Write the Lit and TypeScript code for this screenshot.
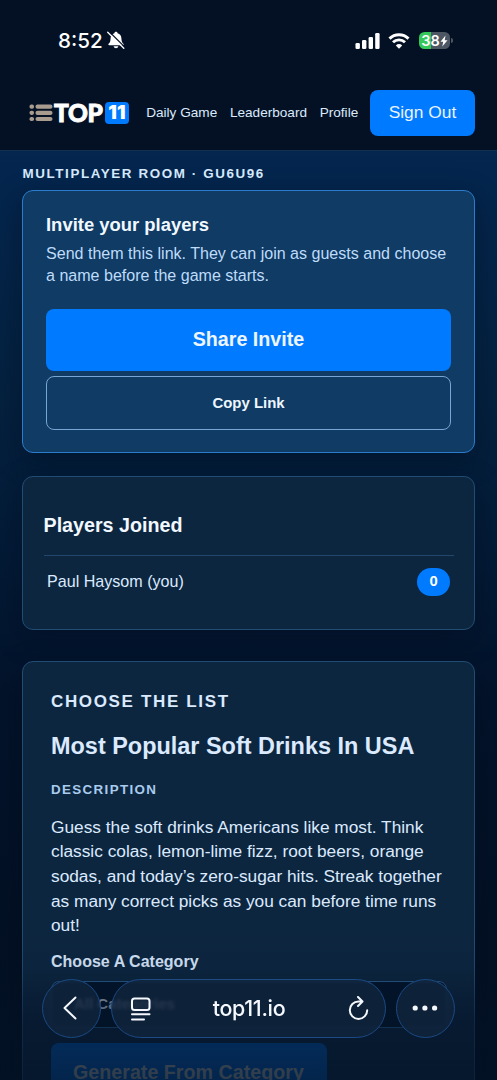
import { LitElement, html, css, svg } from "lit";
import { customElement, property } from "lit/decorators.js";

@customElement("status-bar")
class StatusBar extends LitElement {
  static styles = css`
    :host { display: flex; justify-content: space-between; align-items: center; height: 81px; padding: 0 44px 0 58px; box-sizing: border-box; color: #fff; font-family: Inter, sans-serif; }
    .left { display: flex; align-items: center; gap: 4px; }
    .time { font-size: 20.6px; font-weight: 500; line-height: 24px; }
    .right { display: flex; align-items: center; }
    .wifi { margin-left: 8px; }
    .battery { margin-left: 9px; display: flex; align-items: center; }
    .cell { width: 31px; height: 17px; border-radius: 5.5px; background: linear-gradient(90deg, #34c759 0 12.5px, #4d5764 12.5px); display: flex; align-items: center; justify-content: center; font-size: 14.5px; font-weight: 600; line-height: 17px; letter-spacing: 0; }
    .nub { width: 2px; height: 5px; margin-left: 1px; border-radius: 0 2px 2px 0; background: #4d5764; }
    svg { display: block; }
  `;
  render() {
    return html`
      <div class="left">
        <span class="time">8:52</span>
        <svg width="18" height="19" viewBox="0 0 18 19">
          <path d="M9 .8c.9 0 1.5.6 1.6 1.4 2.4.7 3.7 2.6 3.8 5 .1 3.2.7 4.500 2 5.600.5.5.3 1.500-.7 1.500H2.300c-1 0-1.200-1-.7-1.500 1.300-1.100 1.900-2.400 2-5.600.100-2.400 1.400-4.300 3.800-5C7.500 1.400 8.100.800 9 .800zM6.600 15.300h4.800c-.3 1.200-1.200 1.900-2.400 1.900s-2.100-.7-2.400-1.900z" fill="#fff"/>
          <path d="M1.600 0L18 16.400" stroke="#041124" stroke-width="1.300"/>
          <path d="M.7 1.200L16.800 17.200" stroke="#fff" stroke-width="1.300" stroke-linecap="round"/>
        </svg>
      </div>
      <div class="right">
        <svg width="26" height="16" viewBox="0 0 26 16" fill="#fff">
          <rect x="1.500" y="10" width="4.400" height="6" rx="1.300"/><rect x="8" y="7" width="4.400" height="9" rx="1.300"/>
          <rect x="14.600" y="4" width="4.400" height="12" rx="1.300"/><rect x="21.200" y="0" width="4.400" height="16" rx="1.300"/>
        </svg>
        <svg class="wifi" width="22" height="16" viewBox="0 0 22 16" fill="none" stroke="#fff" stroke-width="2.900">
          <path d="M1.500 5.600a13.600 13.600 0 0 1 19 0"/><path d="M5 9.300a8.600 8.600 0 0 1 12 0"/>
          <path d="M11 15.800L7.800 12.400a4.700 4.700 0 0 1 6.400 0z" fill="#fff" stroke="none"/>
        </svg>
        <div class="battery">
          <div class="cell">38<svg width="8" height="12" viewBox="0 0 8 12"><path d="M5.500.5L.5 6.700h2.700L2.300 11.500 7.500 5.200H4.700z" fill="#fff"/></svg></div>
          <div class="nub"></div>
        </div>
      </div>`;
  }
}

@customElement("site-nav")
class SiteNav extends LitElement {
  static styles = css`
    :host { display: flex; align-items: center; height: 68px; padding: 0 22px 5px 29px; box-sizing: border-box; }
    .logo { display: flex; align-items: center; width: 100px; color: #fff; font-family: Lato, sans-serif; font-weight: 900; }
    .bars { display: block; flex: none; }
    .top { font-size: 24.5px; letter-spacing: -0.3px; line-height: 24px; margin-left: 1px; width: 51px; flex: none; -webkit-text-stroke: 0.9px #fff; }
    .eleven { display: flex; align-items: center; justify-content: center; flex: none; width: 24px; height: 22px; border-radius: 4px; background: #007aff; font-family: Inter, sans-serif; font-size: 19px; line-height: 22px; letter-spacing: 0.2px; }
    .links { display: flex; gap: 12.7px; margin-left: 17.200px; font-size: 13.600px; color: #dbeafe; white-space: nowrap; }
    .out { display: flex; align-items: center; justify-content: center; width: 105px; height: 46px; margin-left: auto; border: 0; border-radius: 8px; background: #007aff; color: #e8f3ff; font: 17.400px "Liberation Sans", sans-serif; }
  `;
  render() {
    return html`
      <div class="logo">
        <svg class="bars" width="24" height="18" viewBox="0 0 24 18" fill="#a89c8f">
          ${[0.5, 6.700, 12.900].map((y) => svg`<rect x="0.500" y=${y} width="4.500" height="4.200" rx="1.800"/><rect x="6.500" y=${y} width="17" height="4.200" rx="2"/>`)}
        </svg>
        <span class="top">TOP</span><span class="eleven">11</span>
      </div>
      <nav class="links"><span>Daily Game</span><span>Leaderboard</span><span>Profile</span></nav>
      <button class="out">Sign Out</button>`;
  }
}

@customElement("invite-card")
class InviteCard extends LitElement {
  static styles = css`
    :host { display: block; height: 263px; box-sizing: border-box; padding: 22px 23px; border: 1px solid #2b7dcc; border-radius: 11px; background: #0f3b64; box-shadow: 0 8px 28px rgba(0, 8, 22, 0.35); }
    h2 { margin: 0; font-size: 18.450px; line-height: 23px; color: #f1f8ff; }
    p { margin: 5.5px 0 0; font-size: 16.060px; line-height: 22.500px; color: #bfdcfb; white-space: nowrap; }
    button { display: block; width: 100%; border-radius: 8px; font-family: "Liberation Sans", sans-serif; font-weight: 700; padding: 0; box-sizing: border-box; }
    .share { height: 62px; margin-top: 22.500px; border: 0; background: #007aff; color: #edf6ff; font-size: 19.700px; padding-bottom: 1px; }
    .copy { height: 54px; margin-top: 5px; border: 1px solid #77a5d4; background: transparent; color: #edf6ff; font-size: 14.950px; padding-bottom: 1px; }
  `;
  render() {
    return html`
      <h2>Invite your players</h2>
      <p>Send them this link. They can join as guests and choose<br />a name before the game starts.</p>
      <button class="share">Share Invite</button>
      <button class="copy">Copy Link</button>`;
  }
}

@customElement("players-card")
class PlayersCard extends LitElement {
  @property({ attribute: false }) players = [{ name: "Paul Haysom (you)", score: 0 }];
  static styles = css`
    :host { display: block; height: 154px; box-sizing: border-box; padding: 36px 20px 0 20.5px; border: 1px solid #214c74; border-radius: 11px; background: #0d2640; box-shadow: 0 8px 28px rgba(0, 8, 22, 0.35); }
    h2 { margin: 0; box-sizing: border-box; height: 43px; font-size: 19.700px; line-height: 24px; color: #f1f8ff; border-bottom: 1px solid #24486c; }
    .row { display: flex; align-items: center; justify-content: space-between; padding: 12px 4px 0 3.5px; font-size: 16.100px; color: #dbeafe; }
    .row span:first-child { padding-bottom: 1px; }
    .score { width: 33px; height: 28px; border-radius: 14px; background: #007aff; color: #fff; font-size: 14.800px; font-weight: 700; line-height: 27px; text-align: center; }
  `;
  render() {
    return html`<h2>Players Joined</h2>
      ${this.players.map((p) => html`<div class="row"><span>${p.name}</span><span class="score">${p.score}</span></div>`)}`;
  }
}

@customElement("list-card")
class ListCard extends LitElement {
  static styles = css`
    :host { display: block; height: 520px; box-sizing: border-box; padding: 28px 27px 0 28px; border: 1px solid #214c74; border-radius: 11px; background: #0d2640; color: #dbeafe; white-space: nowrap; box-shadow: 0 8px 28px rgba(0, 8, 22, 0.35); }
    .kicker { font-size: 17px; font-weight: 700; letter-spacing: 1.650px; line-height: 24px; }
    h2 { margin: 17px 0 0; font-size: 23.450px; line-height: 30px; }
    .label { margin-top: 21px; font-size: 13.400px; font-weight: 700; letter-spacing: 1.340px; line-height: 16px; color: #a9cbed; }
    p { margin: 16.5px 0 0; font-size: 17.300px; line-height: 24.700px; }
    .cat { margin-top: 14px; font-size: 16.050px; font-weight: 700; line-height: 18px; }
    .select { height: 47px; margin-top: 11px; padding-left: 22px; border: 1px solid #2b5c8d; border-radius: 8px; box-sizing: border-box; background: #03152b; font-size: 15px; font-weight: 700; line-height: 43px; color: #a9b6c8; }
    .generate { display: flex; align-items: center; width: 276px; height: 60px; margin-top: 14.5px; padding: 0 0 0 22px; box-sizing: border-box; border: 0; border-radius: 8px; background: #0456ae; color: #a0a6a6; font: 700 19.700px "Liberation Sans", sans-serif; }
  `;
  render() {
    return html`
      <div class="kicker">CHOOSE THE LIST</div>
      <h2>Most Popular Soft Drinks In USA</h2>
      <div class="label">DESCRIPTION</div>
      <p>Guess the soft drinks Americans like most. Think<br />classic colas, lemon-lime fizz, root beers, orange<br />sodas, and today’s zero-sugar hits. Streak together<br />as many correct picks as you can before time runs<br />out!</p>
      <div class="cat">Choose A Category</div>
      <div class="select">All Categories</div>
      <button class="generate">Generate From Category</button>`;
  }
}

@customElement("browser-bar")
class BrowserBar extends LitElement {
  static styles = css`
    :host { position: absolute; left: 0; right: 0; bottom: 0; height: 150px; box-sizing: border-box; display: flex; align-items: flex-start; padding: 49px 42px 0; gap: 10px; background: linear-gradient(180deg, rgba(3, 18, 38, 0) 0%, rgba(3, 18, 38, 0.100) 25%, rgba(3, 18, 38, 0.580) 60%, rgba(3, 18, 38, 0.720) 100%); }
    .glass { height: 59px; box-sizing: border-box; border: 1px solid #1b4a84; border-radius: 30px; background: rgba(17, 37, 62, 0.780); backdrop-filter: blur(1.500px); display: flex; align-items: center; justify-content: center; }
    .round { width: 59px; flex: none; }
    .back { padding-right: 3px; padding-bottom: 1px; }
    .more { padding-right: 2px; padding-bottom: 1px; }
    .address { flex: 1; justify-content: space-between; padding: 0 16px 0 18px; font: 500 21.4px/28px Inter, sans-serif; letter-spacing: -0.300px; color: #f5f9ff; }
    .url { padding-right: 1px; padding-bottom: 1px; }
    svg { display: block; fill: none; stroke: #f5f9ff; stroke-width: 2; stroke-linecap: round; stroke-linejoin: round; }
    .dots { fill: #f5f9ff; stroke: none; }
  `;
  render() {
    return html`
      <div class="glass round back"><svg width="14" height="24" viewBox="0 0 14 24"><path d="M12.500 1.500L1.500 12 12.500 22.500"/></svg></div>
      <div class="glass address">
        <svg width="22" height="24" viewBox="0 0 22 24"><rect x="2" y="1.500" width="17.500" height="11.500" rx="2.500"/><path d="M2 17.200h17.500M2 22.500h12"/></svg>
        <span class="url">top11.io</span>
        <svg width="22" height="26" viewBox="0 0 22 26"><path d="M11.500 5.500H15M11.500 5.500A8.700 8.700 0 1 0 20.200 14.200M11 1L15.500 5.500 11 10"/></svg>
      </div>
      <div class="glass round more"><svg class="dots" width="26" height="6" viewBox="0 0 26 6"><circle cx="3.200" cy="3" r="2.600"/><circle cx="12.900" cy="3" r="2.600"/><circle cx="22.600" cy="3" r="2.600"/></svg></div>`;
  }
}

@customElement("app-root")
class AppRoot extends LitElement {
  static styles = css`
    :host { display: block; position: relative; width: 497px; height: 1080px; overflow: hidden; font-family: "Liberation Sans", sans-serif; background: linear-gradient(180deg, #04264f 150px, #04213f 400px, #031a36 560px, #03132a 700px, #030f21 1080px); }
    .header { height: 150.500px; box-sizing: border-box; background: #041124; border-bottom: 1px solid #12304e; }
    .content { padding: 0 22px; }
    .room { padding: 14px 0 0 0.5px; height: 39.500px; box-sizing: border-box; font-size: 13.400px; font-weight: 700; letter-spacing: 1.600px; line-height: 17px; color: #d5e8fc; white-space: nowrap; }
    .players { margin-top: 23px; }
    .list { margin-top: 31px; }
  `;
  render() {
    return html`
      <header class="header"><status-bar></status-bar><site-nav></site-nav></header>
      <main class="content">
        <div class="room">MULTIPLAYER ROOM · GU6U96</div>
        <invite-card></invite-card>
        <players-card class="players"></players-card>
        <list-card class="list"></list-card>
      </main>
      <browser-bar></browser-bar>`;
  }
}
